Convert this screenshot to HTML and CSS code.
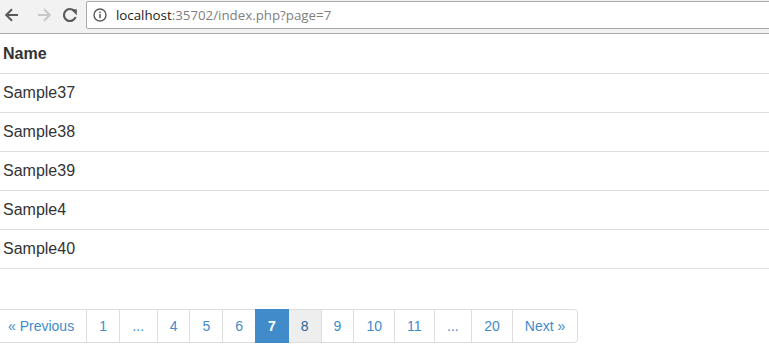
FILE: index.html
```html
<!DOCTYPE html>
<html>
<head>
<meta charset="utf-8">
<link rel="stylesheet" href="styles.css">
</head>
<body>
<div class="chrome">
  <div class="nav">
    <svg class="ico" width="28" height="30" viewBox="0 0 28 30"><path d="M18 15H6.5M12 9.2L6.2 15l5.8 5.8" fill="none" stroke="#5a5a5a" stroke-width="2"/></svg>
    <svg class="ico" width="28" height="30" viewBox="0 0 28 30"><path d="M10 15h11.5M16 9.2l5.8 5.8-5.8 5.8" fill="none" stroke="#c8c8c8" stroke-width="2"/></svg>
    <svg class="ico" width="28" height="30" viewBox="0 0 28 30"><path d="M18.6 11.2A6 6 0 1 0 19.6 17" fill="none" stroke="#5a5a5a" stroke-width="2.2"/><path d="M14.8 9.2h6v6z" fill="#5a5a5a"/></svg>
  </div>
  <div class="omni">
    <svg class="info" width="14" height="14" viewBox="0 0 14 14"><circle cx="7" cy="7" r="6" fill="none" stroke="#5a5a5a" stroke-width="1.4"/><rect x="6.3" y="6" width="1.5" height="4.2" fill="#5a5a5a"/><rect x="6.3" y="3.6" width="1.5" height="1.5" fill="#5a5a5a"/></svg>
    <span class="host">localhost</span><span class="rest">:35702/index.php?page=7</span>
  </div>
</div>
<div class="page">
  <table class="table">
    <thead><tr><th>Name</th></tr></thead>
    <tbody>
      <tr><td>Sample37</td></tr>
      <tr><td>Sample38</td></tr>
      <tr><td>Sample39</td></tr>
      <tr><td>Sample4</td></tr>
      <tr><td>Sample40</td></tr>
    </tbody>
  </table>
  <ul class="pagination">
    <li><a>« Previous</a></li>
    <li><a>1</a></li>
    <li class="dots"><a>...</a></li>
    <li><a>4</a></li>
    <li><a>5</a></li>
    <li><a>6</a></li>
    <li class="active"><a>7</a></li>
    <li class="hover"><a>8</a></li>
    <li><a>9</a></li>
    <li><a>10</a></li>
    <li><a>11</a></li>
    <li class="dots"><a>...</a></li>
    <li><a>20</a></li>
    <li><a>Next »</a></li>
  </ul>
</div>
</body>
</html>
```
FILE: styles.css
```css
html, body {
  margin: 0;
  padding: 0;
  background: #fff;
  overflow: hidden;
}
body {
  font-family: "Liberation Sans", Arial, sans-serif;
  color: #333;
}
.chrome {
  height: 33px;
  background: #f2f2f2;
  border-bottom: 1px solid #a8a8a8;
  display: flex;
  align-items: flex-start;
}
.nav {
  display: flex;
  width: 86px;
  flex: none;
}
.ico { display: block; flex: none; }
.nav .ico:first-child { margin-left: 0; }
.omni {
  margin-top: 1px;
  height: 26px;
  flex: 1;
  margin-right: -20px;
  background: #fff;
  border: 1px solid #a9a9a9;
  border-radius: 2px;
  display: flex;
  align-items: center;
  font-family: "Open Sans", "Noto Sans", sans-serif;
  font-size: 13.3px;
  padding-left: 6px;
}
.info { margin-right: 9px; flex: none; }
.host { color: #222; }
.rest { color: #808080; }
.page {
  margin-left: -5px;
  display: flex;
  flex-direction: column;
  align-items: flex-start;
}
.table {
  width: calc(100% + 5px);
  border-collapse: collapse;
  border-spacing: 0;
  margin-bottom: 20px;
  font-size: 16px;
}
.table th, .table td {
  text-align: left;
  padding: 8px;
  line-height: 22px;
  vertical-align: top;
}
.table th {
  font-weight: bold;
  padding-top: 9px;
  border-bottom: 1px solid #ddd;
}
.table td {
  border-top: 1px solid #ddd;
}
.table tbody tr:last-child td {
  border-bottom: 1px solid #ddd;
}
.pagination {
  display: flex;
  list-style: none;
  margin: 20px 0;
  padding: 0;
  font-size: 14px;
}
.pagination li a {
  display: block;
  padding: 6px 12px;
  line-height: 20px;
  color: #428bca;
  background: #fff;
  border: 1px solid #ddd;
  margin-left: -1px;
}
.pagination li.dots a { padding: 6px 12.5px; }
.pagination li:first-child a { margin-left: 0; border-radius: 4px 0 0 4px; }
.pagination li:last-child a { border-radius: 0 4px 4px 0; }
.pagination li.active a {
  background: #428bca;
  border-color: #428bca;
  color: #fff;
  font-weight: bold;
  position: relative;
  z-index: 2;
}
.pagination li.hover a {
  background: #eee;
  color: #2a6496;
}
```
